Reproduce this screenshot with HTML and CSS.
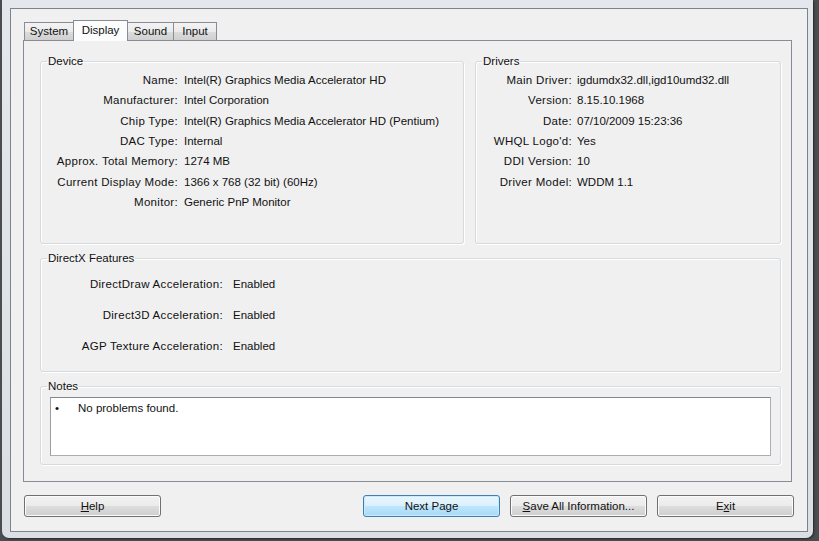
FILE: index.html
```html
<!DOCTYPE html>
<html lang="en">
<head>
<meta charset="UTF-8">
<title>DirectX Diagnostic Tool</title>
<link rel="stylesheet" href="styles.css">
</head>
<body>
<div class="frame">
  <div class="client">
    <div class="tabs">
      <div class="tab system">System</div>
      <div class="tab display active">Display</div>
      <div class="tab sound">Sound</div>
      <div class="tab input">Input</div>
    </div>

    <div class="page">
      <div class="top-row">
        <fieldset class="group device">
          <legend>Device</legend>
          <dl class="props">
            <dt>Name:</dt><dd>Intel(R) Graphics Media Accelerator HD</dd>
            <dt>Manufacturer:</dt><dd>Intel Corporation</dd>
            <dt>Chip Type:</dt><dd>Intel(R) Graphics Media Accelerator HD (Pentium)</dd>
            <dt>DAC Type:</dt><dd>Internal</dd>
            <dt>Approx. Total Memory:</dt><dd>1274 MB</dd>
            <dt>Current Display Mode:</dt><dd>1366 x 768 (32 bit) (60Hz)</dd>
            <dt>Monitor:</dt><dd>Generic PnP Monitor</dd>
          </dl>
        </fieldset>

        <fieldset class="group drivers">
          <legend>Drivers</legend>
          <dl class="props">
            <dt>Main Driver:</dt><dd>igdumdx32.dll,igd10umd32.dll</dd>
            <dt>Version:</dt><dd>8.15.10.1968</dd>
            <dt>Date:</dt><dd>07/10/2009 15:23:36</dd>
            <dt>WHQL Logo'd:</dt><dd>Yes</dd>
            <dt>DDI Version:</dt><dd>10</dd>
            <dt>Driver Model:</dt><dd>WDDM 1.1</dd>
          </dl>
        </fieldset>
      </div>

      <fieldset class="group dx">
        <legend>DirectX Features</legend>
        <dl class="props">
          <dt>DirectDraw Acceleration:</dt><dd>Enabled</dd>
          <dt>Direct3D Acceleration:</dt><dd>Enabled</dd>
          <dt>AGP Texture Acceleration:</dt><dd>Enabled</dd>
        </dl>
      </fieldset>

      <fieldset class="group notes">
        <legend>Notes</legend>
        <div class="notes-box">
          <span class="bullet">&bull;</span>No problems found.
        </div>
      </fieldset>
    </div>

    <div class="buttons">
      <button class="btn"><u>H</u>elp</button>
      <span class="spacer"></span>
      <button class="btn default">Next Page</button>
      <button class="btn"><u>S</u>ave All Information...</button>
      <button class="btn">E<u>x</u>it</button>
    </div>
  </div>
</div>
</body>
</html>
```

FILE: styles.css
```css
* {
  box-sizing: border-box;
}

body {
  margin: 0;
  height: 541px;
  overflow: hidden;
  background: #4b4d50;
  font-family: 'Liberation Sans', Arial, sans-serif;
  font-size: 11.5px;
  color: #111;
}

/* window glass frame */
.frame {
  margin: 0 6px 0 2px;
  height: 538px;
  padding: 8px 5px 6px 8px;
  background: linear-gradient(#e4e8ec, #dadfe4);
  border-radius: 0 0 7px 7px;
  box-shadow: 1px 1px 2px rgba(0,0,0,0.5);
}

.client {
  height: 524px;
  border: 1px solid #7d838a;
  background: #f0f0f0;
  padding: 11px 15px 0 12px;
}

/* tabs */
.tabs {
  display: flex;
  align-items: flex-end;
  height: 20px;
  padding-left: 1px;
}

.tab {
  height: 18px;
  line-height: 17px;
  text-align: center;
  margin-right: -1px;
  border: 1px solid #898c95;
  border-bottom: none;
  background: linear-gradient(#f3f3f3, #ebebeb 50%, #dcdcdc 51%, #cfcfcf);
}

.tab.system { width: 50px; }
.tab.display { width: 55px; }
.tab.sound { width: 47px; }
.tab.input { width: 44px; }

.tab.active {
  height: 21px;
  line-height: 18px;
  margin-bottom: -1px;
  background: #fcfcfc;
  position: relative;
  z-index: 1;
}

/* tab page */
.page {
  height: 442px;
  border: 1px solid #898c95;
  background: #f0f0f0;
  padding: 13px 10px 0 16px;
}

.top-row {
  display: flex;
  gap: 11px;
}

.group {
  margin: 0;
  padding: 0;
  min-width: 0;
  border: 1px solid #d3dbe1;
  border-radius: 3px;
  box-shadow: inset 1px 1px 0 #fff, 1px 1px 0 #fff;
}

.group legend {
  margin-left: 6px;
  padding: 0 1px;
  line-height: 14px;
}

.device {
  width: 424px;
  height: 190px;
}

.drivers {
  width: 306px;
  height: 190px;
}

.dx {
  margin-top: 7px;
  height: 121px;
}

.notes {
  margin-top: 7px;
  height: 86px;
}

/* label / value rows */
.props {
  display: grid;
  margin: 0;
  padding-top: 2px;
  grid-template-columns: 137px 1fr;
  grid-auto-rows: 20.33px;
  column-gap: 6px;
  align-items: center;
}

.props dt {
  text-align: right;
  white-space: nowrap;
  letter-spacing: 0.3px;
}

.props dd {
  margin: 0;
  white-space: nowrap;
}

.drivers .props {
  grid-template-columns: 96px 1fr;
  column-gap: 5px;
}

.dx .props {
  padding-top: 3px;
  grid-template-columns: 182px 1fr;
  grid-auto-rows: 31px;
  column-gap: 10px;
}

.notes-box {
  margin: 4px 9px 0 9px;
  height: 59px;
  background: #fff;
  border: 1px solid #abadb3;
  border-top-color: #828790;
  border-left-color: #9a9da4;
  padding: 3px 4px;
  line-height: 14px;
}

.bullet {
  display: inline-block;
  width: 23px;
}

/* dialog buttons */
.buttons {
  display: flex;
  gap: 10px;
  margin-top: 13px;
  margin-left: -12px;
  margin-right: -15px;
  padding: 0 13px;
}

.spacer {
  flex: 1;
}

.btn {
  width: 137px;
  height: 22px;
  font: inherit;
  color: #111;
  border: 1px solid #707070;
  border-radius: 3px;
  background: linear-gradient(#f2f2f2, #ebebeb 50%, #dddddd 51%, #cfcfcf);
  box-shadow: inset 0 0 0 1px #fcfcfc;
  padding: 0;
}

.btn.default {
  border-color: #3c7fb1;
  background: linear-gradient(#eaf6fd, #d9f0fc 50%, #bee6fd 51%, #a7d9f5);
  box-shadow: inset 0 0 0 1px #c9eaff;
}

.btn u {
  text-decoration: underline;
}
```
